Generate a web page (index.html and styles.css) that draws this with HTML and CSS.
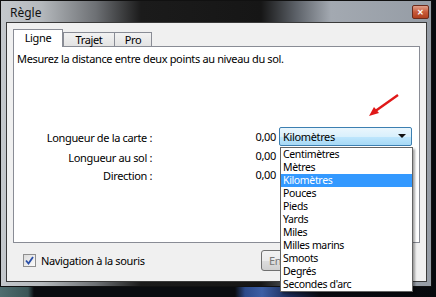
FILE: index.html
```html
<html>

<head>
    <link rel="stylesheet" href="styles.css">
</head>

<body>
    <div class="desk">
        <div class="win">
            <div class="titlebar">
                <span class="title">Règle</span>
                <span class="close">&#x2715;</span>
            </div>
            <div class="client">
                <div class="tabs">
                    <span class="tab active">Ligne</span>
                    <span class="tab">Trajet</span>
                    <span class="tab">Pro</span>
                </div>
                <div class="page">
                    <p class="intro">Mesurez la distance entre deux points au niveau du sol.</p>
                    <div class="fields">
                        <span class="label">Longueur de la carte :</span>
                        <span class="value">0,00</span>
                        <div class="combo">Kilomètres<span class="caret"></span></div>

                        <span class="label">Longueur au sol :</span>
                        <span class="value">0,00</span>
                        <span></span>

                        <span class="label">Direction :</span>
                        <span class="value">0,00</span>
                        <span></span>
                    </div>
                </div>
                <div class="footer">
                    <label class="check"><span class="box"><svg width="9" height="9" viewBox="0 0 9 9"><path d="M1 4.5 L3.5 7.5 L8 1" fill="none" stroke="#2a4fa8" stroke-width="1.8"/></svg></span>Navigation à la souris</label>
                    <span class="btn">Enregistrer</span>
                </div>
            </div>
        </div>

        <!-- open list of the units combo -->
        <ul class="droplist">
            <li>Centimètres</li>
            <li>Mètres</li>
            <li class="sel">Kilomètres</li>
            <li>Pouces</li>
            <li>Pieds</li>
            <li>Yards</li>
            <li>Miles</li>
            <li>Milles marins</li>
            <li>Smoots</li>
            <li>Degrés</li>
            <li>Secondes d'arc</li>
        </ul>

        <svg class="arrow" width="36" height="28" viewBox="0 0 36 28">
            <path d="M32 2 L8 19" stroke="#e01818" stroke-width="2.4" fill="none"/>
            <path d="M3 23 L13 20 L8 14 Z" fill="#e01818"/>
        </svg>
    </div>
</body>

</html>
```

FILE: styles.css
```css
body {
    margin: 0;
    background: #05070a;
    font-family: "Noto Sans", "Open Sans", sans-serif;
    font-size: 11px;
    letter-spacing: -0.35px;
    color: #000;
}

.desk {
    position: relative;
    width: 436px;
    height: 297px;
    overflow: hidden;
    background:
        linear-gradient(90deg, #4f6d6f 0px, #3a5556 28px, #0a0c10 34px, #0a0c10 235px, #2c4a8a 245px, #3d5fa5 262px, #1a2a55 290px, #0a0c12 320px, #07090d 100%);
}

.win {
    width: 432px;
    height: 287px;
    border: 1px solid #111;
    box-sizing: border-box;
    background: linear-gradient(90deg, #c4c8cc 0px, #b5b9bd 40px, #6d7074 95px, #1b1b1b 140px, #161616 260px, #5c6168 295px, #a3a9b1 330px, #959ca5 100%);
    padding: 0 4px 4px 5px;
    display: flex;
    flex-direction: column;
}

.titlebar {
    height: 21px;
    display: flex;
    align-items: center;
    justify-content: space-between;
    flex-shrink: 0;
}

.title {
    font-size: 12px;
    letter-spacing: 0;
    color: #111;
    padding-left: 4px;
    padding-top: 1px;
}

.close {
    width: 15px;
    height: 12px;
    margin-top: 1px;
    margin-right: -2px;
    border: 1px solid #6b2a1a;
    border-radius: 2px;
    background: linear-gradient(#e0a08a, #c85a3a 50%, #b0401f);
    color: #fff;
    font-size: 8px;
    font-weight: bold;
    line-height: 12px;
    text-align: center;
}

.client {
    flex: 1;
    background: #f0f0f0;
    border: 1px solid #3a3a3a;
    padding: 6px 6px 0 6px;
    display: flex;
    flex-direction: column;
}

.tabs {
    display: flex;
    align-items: flex-end;
    height: 17px;
    position: relative;
    z-index: 1;
}

.tab {
    box-sizing: border-box;
    height: 14px;
    line-height: 13px;
    border: 1px solid #898c95;
    border-bottom: none;
    background: linear-gradient(#f2f2f2, #e3e3e3);
    text-align: center;
    margin-left: -1px;
}

.tab:nth-child(2) { width: 52px; }
.tab:nth-child(3) { width: 38px; }

.tab.active {
    width: 50px;
    height: 18px;
    line-height: 16px;
    background: #fff;
    margin-left: 0;
    margin-right: 1px;
    margin-bottom: -1px;
}

.page {
    height: 197px;
    box-sizing: border-box;
    background: #fff;
    border: 1px solid #898c95;
    padding: 5px 3px 0 3px;
}

.intro {
    margin: 0;
    line-height: 14px;
}

.fields {
    margin-top: 60px;
    display: grid;
    grid-template-columns: 135px 127px 133px;
    grid-template-rows: 20px 19px 18px;
    align-items: center;
}

.label,
.value {
    text-align: right;
}

.label {
    padding-top: 2px;
}

.label:nth-child(4) {
    padding-top: 4px;
}

.value {
    padding-right: 3px;
}

.combo {
    height: 19px;
    box-sizing: border-box;
    border: 1px solid #3c7fb1;
    border-radius: 2px;
    background: linear-gradient(#eaf6fd, #d9f0fc 50%, #bee6fd 51%, #a7d9f5);
    padding-left: 3px;
    line-height: 17px;
    display: flex;
    justify-content: space-between;
    align-items: center;
}

.caret {
    width: 0;
    height: 0;
    border-left: 4px solid transparent;
    border-right: 4px solid transparent;
    border-top: 4px solid #111;
    margin-right: 5px;
}

.footer {
    flex: 1;
    display: flex;
    align-items: center;
    padding-left: 10px;
    padding-bottom: 4px;
}

.check {
    display: flex;
    align-items: center;
    gap: 5px;
    width: 238px;
}

.box {
    width: 11px;
    height: 11px;
    border: 1px solid #8f8f8f;
    background: linear-gradient(135deg, #dcdcdc, #fbfbfb);
    display: flex;
    align-items: center;
    justify-content: center;
}

.btn {
    width: 73px;
    height: 19px;
    border: 1px solid #707070;
    border-radius: 3px;
    background: linear-gradient(#f2f2f2, #ebebeb 50%, #dddddd 51%, #cfcfcf);
    line-height: 19px;
    padding-left: 7px;
    color: #777;
}

.droplist {
    position: absolute;
    left: 280px;
    top: 147px;
    width: 133px;
    margin: 0;
    padding: 0;
    list-style: none;
    background: #fff;
    border: 1px solid #646464;
    box-sizing: border-box;
    box-shadow: 2px 2px 2px rgba(0, 0, 0, 0.35);
    font-size: 10.5px;
}

.droplist li {
    height: 13px;
    line-height: 13px;
    padding-left: 2px;
}

.droplist li.sel {
    background: #3399ff;
    color: #fff;
}

.arrow {
    position: absolute;
    left: 366px;
    top: 93px;
}
```
